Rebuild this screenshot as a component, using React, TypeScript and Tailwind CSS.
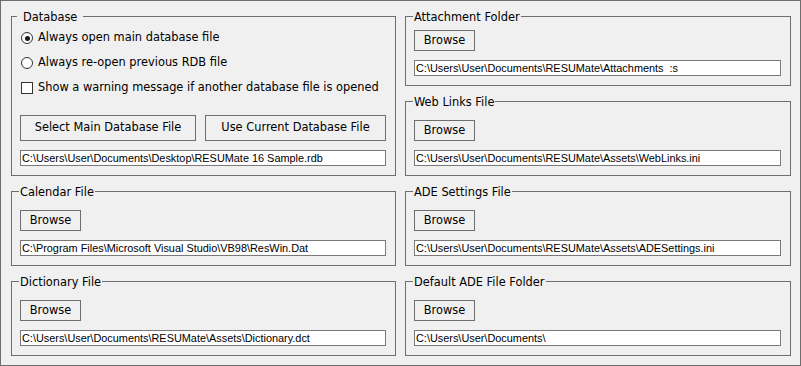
import type { ReactNode } from "react";

const UI = "font-['DejaVu_Sans',sans-serif] text-[11.4px] text-black";
const LINE = "border-[#6e6e6e]";

interface GroupBoxProps {
  title: string;
  wide?: boolean;
  className?: string;
  children: ReactNode;
}

// Windows-style group box: border with the caption sitting on the top line
function GroupBox({ title, wide, className = "", children }: GroupBoxProps) {
  return (
    <div className={`relative border ${LINE} ${className}`}>
      <span
        className={`absolute top-[-8px] whitespace-nowrap bg-[#f0f0f0] leading-[16px] ${
          wide ? "left-[5px] px-[6px]" : "left-[7px] px-[1px]"
        }`}
      >
        {title}
      </span>
      {children}
    </div>
  );
}

function PathField({ value }: { value: string }) {
  return (
    <div className="flex h-[16px] items-center overflow-hidden whitespace-pre border border-[#7a7a7a] bg-white pl-[1px] font-['Liberation_Sans',sans-serif] text-[10.9px] leading-none text-black">
      {value}
    </div>
  );
}

function Button({ label, className = "" }: { label: string; className?: string }) {
  return (
    <button
      type="button"
      className={`border ${LINE} bg-[#f0f0f0] leading-none ${className}`}
    >
      {label}
    </button>
  );
}

function FileBox({ title, path, tight }: { title: string; path: string; tight?: boolean }) {
  return (
    <GroupBox
      title={title}
      className={`flex flex-col gap-[9px] pb-[9px] pl-[8px] pr-[9px] ${tight ? "pt-[13px]" : "pt-[18px]"}`}
    >
      <Button label="Browse" className="h-[21px] w-[61px] self-start" />
      <PathField value={path} />
    </GroupBox>
  );
}

function Radio({ label, checked }: { label: string; checked?: boolean }) {
  return (
    <label className="flex h-[25px] items-center gap-[5px] pl-[1px] pt-[1px]">
      <span className="flex h-[12px] w-[12px] items-center justify-center rounded-full border border-[#333333] bg-white">
        {checked && <span className="h-[5px] w-[5px] rounded-full bg-[#1a1a1a]" />}
      </span>
      {label}
    </label>
  );
}

function Check({ label }: { label: string }) {
  return (
    <label className="flex h-[25px] items-center gap-[5px] pl-[1px] pt-[1px]">
      <span className="h-[12px] w-[12px] border border-[#333333] bg-white" />
      {label}
    </label>
  );
}

export default function App() {
  return (
    <div
      className={`h-[366px] w-[801px] border ${LINE} bg-[#f0f0f0] pb-[9px] pl-[10px] pr-[9px] pt-[15px] ${UI}`}
    >
      <div className="grid grid-cols-[385px_386px] gap-x-[9px]">
        <div className="flex flex-col gap-[15px]">
          <GroupBox title="Database" wide className="flex flex-col pb-[9px] pl-[8px] pr-[9px] pt-[8px]">
            <Radio label="Always open main database file" checked />
            <Radio label="Always re-open previous RDB file" />
            <Check label="Show a warning message if another database file is opened" />
            <div className="mt-[15px] flex gap-[9px]">
              <Button label="Select Main Database File" className="h-[26px] w-[176px]" />
              <Button label="Use Current Database File" className="h-[26px] w-[181px]" />
            </div>
            <div className="mt-[9px]">
              <PathField value="C:\Users\User\Documents\Desktop\RESUMate 16 Sample.rdb" />
            </div>
          </GroupBox>
          <FileBox title="Calendar File" path="C:\Program Files\Microsoft Visual Studio\VB98\ResWin.Dat" />
          <FileBox title="Dictionary File" path="C:\Users\User\Documents\RESUMate\Assets\Dictionary.dct" />
        </div>
        <div className="flex flex-col gap-[15px]">
          <FileBox title="Attachment Folder" path="C:\Users\User\Documents\RESUMate\Attachments  :s" tight />
          <FileBox title="Web Links File" path="C:\Users\User\Documents\RESUMate\Assets\WebLinks.ini" />
          <FileBox title="ADE Settings File" path="C:\Users\User\Documents\RESUMate\Assets\ADESettings.ini" />
          <FileBox title="Default ADE File Folder" path="C:\Users\User\Documents\" />
        </div>
      </div>
    </div>
  );
}
